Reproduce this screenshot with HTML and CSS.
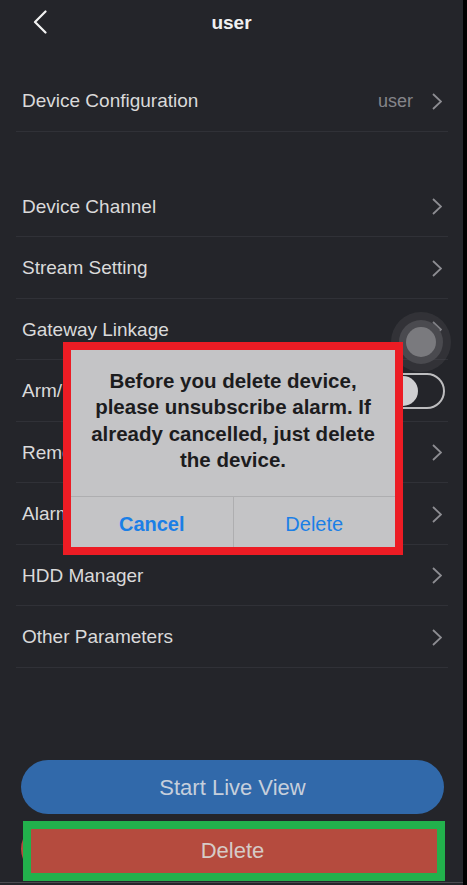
FILE: index.html
```html
<!DOCTYPE html>
<html>
<head>
<meta charset="utf-8">
<link rel="stylesheet" href="styles.css">
</head>
<body>
<div class="screen">
  <header class="header">
    <svg class="back" width="14" height="24" viewBox="0 0 14 24"><path d="M12.5 1.5 L2 12 L12.5 22.5" fill="none" stroke="#f2f2f2" stroke-width="2.2" stroke-linecap="round" stroke-linejoin="round"/></svg>
    <h1 class="title">user</h1>
  </header>

  <div class="group first">
    <div class="row"><span class="label">Device Configuration</span><span class="value">user</span><svg class="chev" width="10" height="17" viewBox="0 0 10 17"><path d="M1 1 L9 8.5 L1 16" fill="none" stroke="#8d8d92" stroke-width="1.8"/></svg></div>
  </div>

  <div class="group">
    <div class="row"><span class="label">Device Channel</span><svg class="chev" width="10" height="17" viewBox="0 0 10 17"><path d="M1 1 L9 8.5 L1 16" fill="none" stroke="#8d8d92" stroke-width="1.8"/></svg></div>
    <div class="row"><span class="label">Stream Setting</span><svg class="chev" width="10" height="17" viewBox="0 0 10 17"><path d="M1 1 L9 8.5 L1 16" fill="none" stroke="#8d8d92" stroke-width="1.8"/></svg></div>
    <div class="row"><span class="label">Gateway Linkage</span><svg class="chev" width="10" height="17" viewBox="0 0 10 17"><path d="M1 1 L9 8.5 L1 16" fill="none" stroke="#8d8d92" stroke-width="1.8"/></svg></div>
    <div class="row"><span class="label">Arm/Disarm</span><span class="toggle"><span class="knob"></span></span></div>
    <div class="row"><span class="label">Remote Configuration</span><svg class="chev" width="10" height="17" viewBox="0 0 10 17"><path d="M1 1 L9 8.5 L1 16" fill="none" stroke="#8d8d92" stroke-width="1.8"/></svg></div>
    <div class="row"><span class="label">Alarm Setting</span><svg class="chev" width="10" height="17" viewBox="0 0 10 17"><path d="M1 1 L9 8.5 L1 16" fill="none" stroke="#8d8d92" stroke-width="1.8"/></svg></div>
    <div class="row"><span class="label">HDD Manager</span><svg class="chev" width="10" height="17" viewBox="0 0 10 17"><path d="M1 1 L9 8.5 L1 16" fill="none" stroke="#8d8d92" stroke-width="1.8"/></svg></div>
    <div class="row"><span class="label">Other Parameters</span><svg class="chev" width="10" height="17" viewBox="0 0 10 17"><path d="M1 1 L9 8.5 L1 16" fill="none" stroke="#8d8d92" stroke-width="1.8"/></svg></div>
  </div>

  <footer class="footer">
    <button class="btn btn-live"><span>Start Live View</span></button>
    <button class="btn btn-delete"><span>Delete</span></button>
  </footer>
  <div class="home-line"></div>

  <div class="assist"><span class="assist-ring"><span class="assist-dot"></span></span></div>

  <div class="dialog">
    <p class="msg">Before you delete device, please unsubscribe alarm. If already cancelled, just delete the device.</p>
    <div class="actions">
      <span class="action cancel">Cancel</span>
      <span class="action confirm">Delete</span>
    </div>
  </div>
</div>
</body>
</html>
```

FILE: styles.css
```css
html, body {
  margin: 0;
  padding: 0;
  background: #000;
}

.screen {
  position: relative;
  width: 463px;
  height: 885px;
  background: #24252a;
  display: flex;
  flex-direction: column;
  font-family: "Liberation Sans", Arial, sans-serif;
  color: #dcdcdc;
  overflow: hidden;
}

.header {
  height: 44px;
  padding-top: 2px;
  box-sizing: border-box;
  display: flex;
  align-items: center;
  justify-content: center;
  position: relative;
}

.back {
  position: absolute;
  left: 33px;
  top: 10px;
}

.title {
  margin: 0;
  font-size: 19px;
  font-weight: bold;
  color: #f0f0f0;
}

.group.first {
  margin-top: 26px;
  margin-bottom: 44px;
}

.row {
  height: 61.5px;
  box-sizing: border-box;
  margin: 0 15px 0 16px;
  padding: 2px 6px 0;
  border-bottom: 1px solid #303137;
  display: flex;
  align-items: center;
}

.label {
  flex: 1;
  font-size: 19px;
  color: #dadada;
  white-space: nowrap;
}

.value {
  font-size: 18px;
  color: #85858a;
  margin-right: 19px;
}

.chev {
  display: block;
}

.toggle {
  width: 60px;
  height: 36px;
  box-sizing: border-box;
  border: 2px solid #bdbdbf;
  border-radius: 18px;
  margin-right: -3px;
  position: relative;
}

.knob {
  position: absolute;
  left: 1px;
  top: 1px;
  width: 30px;
  height: 30px;
  border-radius: 50%;
  background: #cfcfd1;
}

.footer {
  margin-top: auto;
  padding: 0 19px 0 21px;
  display: flex;
  flex-direction: column;
  gap: 8px;
}

.btn {
  height: 54px;
  border: none;
  border-radius: 27px;
  font-family: "Liberation Sans", Arial, sans-serif;
  font-size: 22px;
  padding: 0;
}

.btn span {
  position: relative;
  z-index: 1;
  top: 1px;
}

.btn-live {
  background: #3169aa;
  color: #c6cfdc;
}

.btn-delete {
  position: relative;
  background: #b54b3e;
  color: #d6cbc7;
}

.btn-delete::after {
  content: "";
  position: absolute;
  left: 2px;
  top: -1px;
  width: 422px;
  height: 60px;
  box-sizing: border-box;
  border: 8px solid #22b14c;
  background: #b54b3e;
}

.btn-delete span {
  top: 2px;
}

.home-line {
  margin-top: 6px;
  margin-bottom: 2px;
  height: 1px;
  background: #4b4b50;
}

.assist {
  position: absolute;
  left: 391px;
  top: 312px;
  width: 60px;
  height: 60px;
  border-radius: 50%;
  background: rgba(90, 90, 96, 0.25);
  display: flex;
  align-items: center;
  justify-content: center;
}

.assist-ring {
  width: 44px;
  height: 44px;
  border-radius: 50%;
  background: #4a4a4f;
  display: flex;
  align-items: center;
  justify-content: center;
}

.assist-dot {
  width: 30px;
  height: 30px;
  border-radius: 50%;
  background: #7a7a7e;
}

.dialog {
  position: absolute;
  left: 63px;
  top: 342px;
  width: 340px;
  height: 213px;
  box-sizing: border-box;
  border: 8px solid #ec1c24;
  background: #c4c4c6;
  display: flex;
  flex-direction: column;
}

.msg {
  margin: 0;
  height: 146px;
  box-sizing: border-box;
  padding: 18px 14px 0;
  font-size: 20.5px;
  line-height: 26.3px;
  font-weight: bold;
  color: #1c1c1e;
  text-align: center;
}

.actions {
  flex: 1;
  display: flex;
  border-top: 1px solid #aeaeb0;
}

.action {
  flex: 1;
  display: flex;
  align-items: center;
  justify-content: center;
  padding-top: 5px;
  font-size: 20px;
  color: #1b7fe6;
}

.cancel {
  font-weight: bold;
  border-right: 1px solid #aeaeb0;
}
```
